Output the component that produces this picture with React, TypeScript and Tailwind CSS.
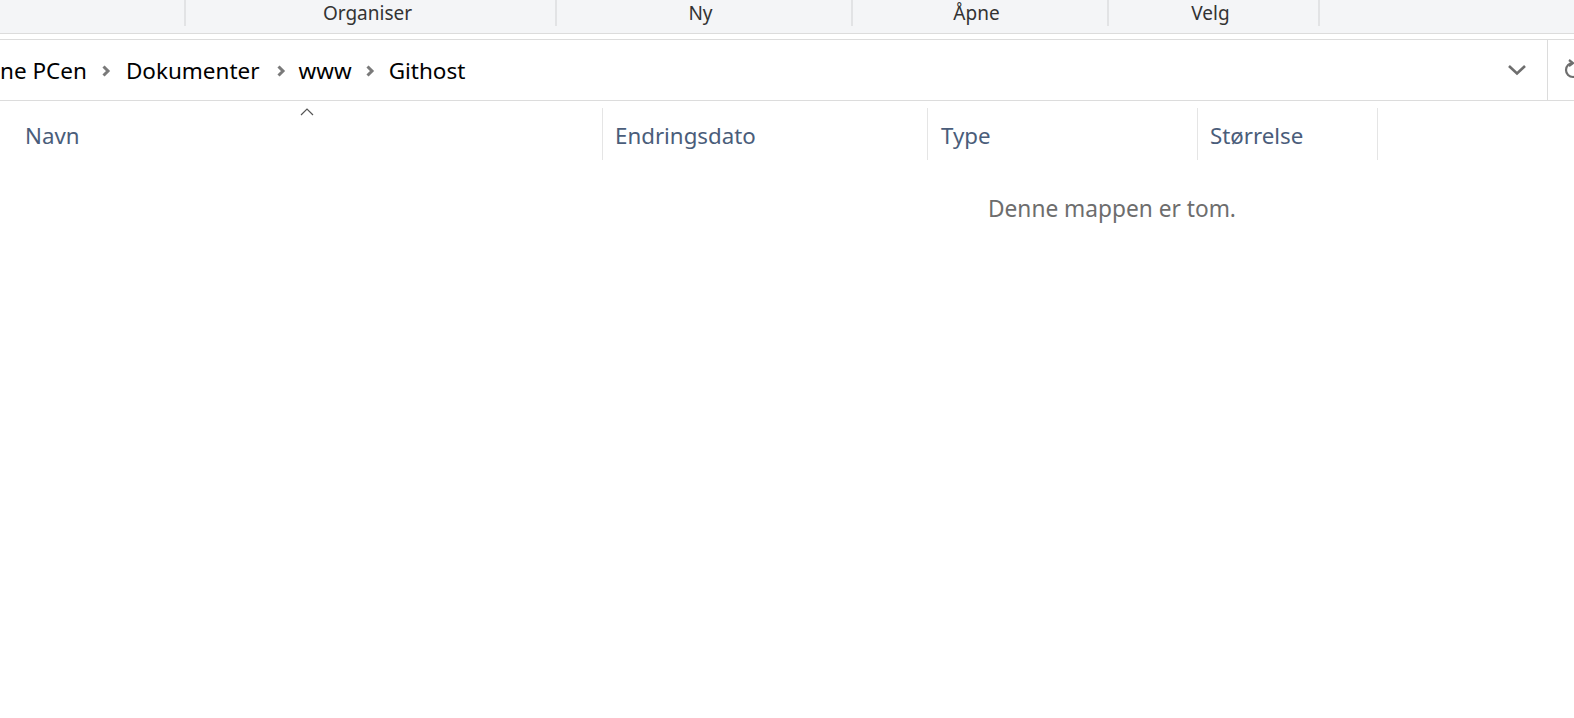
import React from "react";

const font = { fontFamily: '"Noto Sans", "Open Sans", sans-serif' };

function Sep() {
  return <div className="w-[2px] h-[26px] bg-[#e2e3e5] shrink-0" />;
}

function Chevron() {
  return (
    <svg width="10" height="12" viewBox="0 0 10 12" className="shrink-0">
      <polyline points="2.5,1.5 7,6 2.5,10.5" fill="none" stroke="#7a7a7a" strokeWidth="3" />
    </svg>
  );
}

export default function App() {
  return (
    <div className="w-[1574px] h-[718px] bg-white overflow-hidden relative" style={font}>
      {/* toolbar */}
      <div className="h-[34px] bg-[#f4f5f7] border-b border-[#dcdcdc] flex items-start text-[19px] text-[#333333]">
        <div className="w-[184px] shrink-0" />
        <Sep />
        <div className="w-[369px] shrink-0 h-[26px] flex items-center justify-center leading-none pr-[6px]">Organiser</div>
        <Sep />
        <div className="w-[294px] shrink-0 h-[26px] flex items-center justify-center leading-none pr-[7px]">Ny</div>
        <Sep />
        <div className="w-[254px] shrink-0 h-[26px] flex items-center justify-center leading-none pr-[7px]">Åpne</div>
        <Sep />
        <div className="w-[209px] shrink-0 h-[26px] flex items-center justify-center leading-none pr-[6px]">Velg</div>
        <Sep />
      </div>
      {/* address bar */}
      <div className="mt-[5px] h-[62px] border-y border-[#dcdcdc] flex items-stretch">
        <div className="flex-1 flex items-center pt-[2px] text-[22.5px] text-black">
          <span className="mr-[14px]">ne PCen</span>
          <Chevron />
          <span className="ml-[15px] mr-[16px]">Dokumenter</span>
          <Chevron />
          <span className="ml-[13px] mr-[13px]">www</span>
          <Chevron />
          <span className="ml-[14px]">Githost</span>
        </div>
        <div className="w-[58px] flex items-center justify-center shrink-0 pr-[2px]">
          <svg width="20" height="12" viewBox="0 0 20 12">
            <polyline points="2,2 10,9.5 18,2" fill="none" stroke="#6e6e6e" strokeWidth="2.6" />
          </svg>
        </div>
        <div className="w-[1px] bg-[#dcdcdc] shrink-0" />
        <div className="w-[26px] shrink-0 flex items-center pl-[14px] overflow-hidden">
          <svg width="22" height="22" viewBox="0 0 22 22" className="shrink-0">
            <path d="M11 4 A7 7 0 1 0 18 11" fill="none" stroke="#6e6e6e" strokeWidth="2.2" />
            <polyline points="7,1 11,4 7,7" fill="none" stroke="#6e6e6e" strokeWidth="2.2" />
          </svg>
        </div>
      </div>
      {/* column headers */}
      <div className="relative h-[59px] flex items-stretch pt-[7px] text-[22.3px] text-[#4a5d7a]">
        <div className="w-[602px] shrink-0 flex items-center pl-[25px] pt-[4px] relative">
          Navn
          <svg width="14" height="8" viewBox="0 0 14 8" className="absolute left-[300px] top-[0px]">
            <polyline points="1,7 7,1 13,7" fill="none" stroke="#555" strokeWidth="1.2" />
          </svg>
        </div>
        <div className="w-[1px] bg-[#e5e5e5] shrink-0" />
        <div className="w-[324px] shrink-0 flex items-center pl-[12px] pt-[4px]">Endringsdato</div>
        <div className="w-[1px] bg-[#e5e5e5] shrink-0" />
        <div className="w-[269px] shrink-0 flex items-center pl-[13px] pt-[4px]">Type</div>
        <div className="w-[1px] bg-[#e5e5e5] shrink-0" />
        <div className="w-[179px] shrink-0 flex items-center pl-[12px] pt-[4px]">Størrelse</div>
        <div className="w-[1px] bg-[#e5e5e5] shrink-0" />
      </div>
      <div className="pl-[988px] pt-[38px] text-[22.7px] text-[#6d6d6d] leading-none">Denne mappen er tom.</div>
    </div>
  );
}
